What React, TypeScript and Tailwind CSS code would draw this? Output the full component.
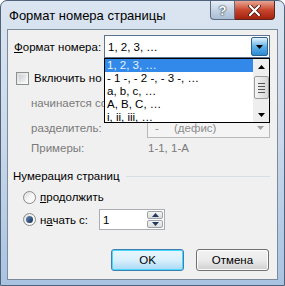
import React from "react";

const font = "font-['Liberation_Sans',Arial,sans-serif]";

const DownTri = ({ color = "#000" }: { color?: string }) => (
  <svg width="7" height="4" viewBox="0 0 7 4">
    <path d="M0 0h7L3.5 4z" fill={color} />
  </svg>
);

const UpTri = ({ color = "#000" }: { color?: string }) => (
  <svg width="7" height="4" viewBox="0 0 7 4">
    <path d="M0 4h7L3.5 0z" fill={color} />
  </svg>
);

const items = ["1, 2, 3, …", "- 1 -, - 2 -, - 3 -, …", "a, b, c, …", "A, B, C, …", "i, ii, iii, …"];

const TitleBar: React.FC = () => (
  <div className="flex h-[28px] items-start">
    <div className="pl-[8px] pt-[6px] text-[13px] leading-[18px] text-black">Формат номера страницы</div>
    <div className="ml-auto mr-[9px] flex">
      <div className="flex h-[19px] w-[25px] items-center justify-center rounded-bl-[4px] border border-t-0 border-[#5c6b80] bg-gradient-to-b from-[#e7eef6] via-[#c5d3e3] to-[#a9bdd3] text-[13px] font-bold leading-none text-white [text-shadow:0_0_2px_#1c2a3d,0_0_1px_#1c2a3d]">
        ?
      </div>
      <div className="flex h-[19px] w-[40px] items-center justify-center rounded-br-[4px] border border-l-0 border-t-0 border-[#5c2620] bg-gradient-to-b from-[#e8a493] via-[#c8452d] to-[#a4200e]">
        <svg width="13" height="11" viewBox="0 0 13 11">
          <path d="M2 1l9 9M11 1l-9 9" stroke="#3a1008" strokeWidth="3.6" strokeLinecap="round" />
          <path d="M2 1l9 9M11 1l-9 9" stroke="#fff" strokeWidth="2.2" strokeLinecap="round" />
        </svg>
      </div>
    </div>
  </div>
);

// открытый список форматов лежит поверх остальных полей
const DropList: React.FC = () => (
  <div className="absolute left-[96px] top-[28px] z-10 flex h-[65px] w-[166px] border border-black bg-white">
    <div className="flex-1 overflow-hidden">
      {items.map((t, i) => (
        <div
          key={t}
          className={`h-[13px] whitespace-nowrap pl-[2px] text-[11.5px] leading-[13px] ${
            i === 0 ? "bg-[#3289ea] text-[#e8f4ff]" : "text-black"
          }`}
        >
          {t}
        </div>
      ))}
    </div>
    <div className="flex w-[16px] flex-col items-center bg-[#eeeeee]">
      <div className="flex h-[15px] items-center">
        <UpTri />
      </div>
      <div className="mt-[2px] flex h-[23px] w-[15px] flex-col items-center justify-center gap-[2px] rounded-[2px] border border-[#9c9c9c] bg-gradient-to-r from-[#f4f4f4] to-[#d6d6d6]">
        <div className="h-px w-[7px] bg-[#555]" />
        <div className="h-px w-[7px] bg-[#555]" />
        <div className="h-px w-[7px] bg-[#555]" />
        <div className="h-px w-[7px] bg-[#555]" />
      </div>
      <div className="mt-auto flex h-[14px] items-center">
        <DownTri />
      </div>
    </div>
  </div>
);

const Radio: React.FC<{ checked?: boolean }> = ({ checked }) => (
  <div className="flex h-[13px] w-[13px] items-center justify-center rounded-full border border-[#8a8a8a] bg-gradient-to-br from-[#d9d9d9] via-[#f6f6f6] to-white">
    {checked && <div className="h-[7px] w-[7px] rounded-full bg-gradient-to-br from-[#6f8fb6] to-[#0c2b57]" />}
  </div>
);

export default function App() {
  return (
    <div
      className={`${font} relative h-[286px] w-[285px] overflow-hidden rounded-t-[7px] border border-[#50627a] bg-gradient-to-b from-[#dbe5f1] via-[#c9d8ea] to-[#a8c3e2]`}
    >
      <TitleBar />
      <div className="relative mx-[6px] h-[251px] border border-[#7d8a9c] bg-[#f0f0f0] text-[11.5px] leading-[14px] text-black">
        <DropList />

        <div className="mt-[5px] flex h-[23px] items-center pl-[6px]">
          <div className="w-[90px]">
            <span className="underline">Ф</span>ормат номера:
          </div>
          <div className="flex h-[23px] w-[166px] items-center border border-[#5b7390] bg-white pl-[3px]">
            <span>1, 2, 3, …</span>
            <div className="ml-auto mr-px flex h-[19px] w-[17px] items-center justify-center rounded-[2px] border border-[#2c628b] bg-gradient-to-b from-[#e5f4fc] via-[#5fb1e6] to-[#2c8ad4]">
              <DownTri />
            </div>
          </div>
        </div>

        <div className="mt-[13px] flex h-[14px] items-center pl-[8px]">
          <div className="h-[13px] w-[13px] border border-[#8e8f8f] bg-gradient-to-br from-[#dcdcdc] to-white p-[2px]">
            <div className="h-full w-full bg-gradient-to-br from-[#cbcfd5] to-[#f4f4f4]" />
          </div>
          <div className="ml-[5px] w-[68px] overflow-hidden whitespace-nowrap">Включить номер главы</div>
        </div>

        <div className="mt-[11px] flex h-[14px] items-center pl-[23px] text-[#7a7a7a]">
          <div className="w-[73px] overflow-hidden whitespace-nowrap">начинается со стиля:</div>
        </div>

        <div className="mt-[8px] flex h-[20px] items-center pl-[23px] text-[#7a7a7a]">
          <div className="w-[116px]">разделитель:</div>
          <div className="flex h-[20px] w-[123px] items-center border border-[#b9b9b9] bg-[#f4f4f4] pl-[7px] text-[#8d8d8d]">
            <span className="w-[19px]">-</span>
            <span>(дефис)</span>
            <div className="ml-auto mr-px flex h-[16px] w-[16px] items-center justify-center">
              <DownTri color="#a0a0a0" />
            </div>
          </div>
        </div>

        <div className="mt-[3px] flex h-[14px] items-center pl-[23px] text-[#7a7a7a]">
          <div className="w-[117px]">Примеры:</div>
          <span>1-1, 1-A</span>
        </div>

        <div className="mt-[14px] flex h-[14px] items-center pl-[5px] pr-[7px]">
          <span className="whitespace-nowrap">Нумерация страниц</span>
          <div className="ml-[6px] h-px flex-1 bg-[#d5dfe5]" />
        </div>

        <div className="mt-[7px] flex h-[14px] items-center pl-[15px]">
          <Radio />
          <span className="ml-[4px]">
            <span className="underline">п</span>родолжить
          </span>
        </div>

        <div className="mt-[5px] flex h-[21px] items-center pl-[15px]">
          <Radio checked />
          <span className="ml-[4px] w-[59px]">
            н<span className="underline">а</span>чать с:
          </span>
          <div className="flex h-[21px] w-[66px] items-center border border-[#abadb3] bg-white pl-[3px]">
            <span>1</span>
            <div className="ml-auto mr-px flex flex-col gap-px">
              <div className="flex h-[8px] w-[16px] items-center justify-center rounded-[2px] border border-[#9aa3ad] bg-gradient-to-b from-[#f5f5f5] to-[#dcdcdc]">
                <UpTri color="#1e395b" />
              </div>
              <div className="flex h-[8px] w-[16px] items-center justify-center rounded-[2px] border border-[#9aa3ad] bg-gradient-to-b from-[#f5f5f5] to-[#dcdcdc]">
                <DownTri color="#1e395b" />
              </div>
            </div>
          </div>
        </div>

        <div className="mt-[19px] flex justify-end gap-[12px] pr-[8px]">
          <button className="flex h-[22px] w-[73px] items-center justify-center rounded-[3px] border border-[#3c7fb1] bg-gradient-to-b from-[#eaf6fd] via-[#d9f0fc] to-[#a7d9f5] text-[11.5px] shadow-[inset_0_0_0_1px_#48d8fb]">
            OK
          </button>
          <button className="flex h-[22px] w-[73px] items-center justify-center rounded-[3px] border border-[#707070] bg-gradient-to-b from-[#f2f2f2] via-[#ebebeb] to-[#cfcfcf] text-[11.5px] shadow-[inset_0_0_0_1px_#fcfcfc]">
            Отмена
          </button>
        </div>
      </div>
    </div>
  );
}
